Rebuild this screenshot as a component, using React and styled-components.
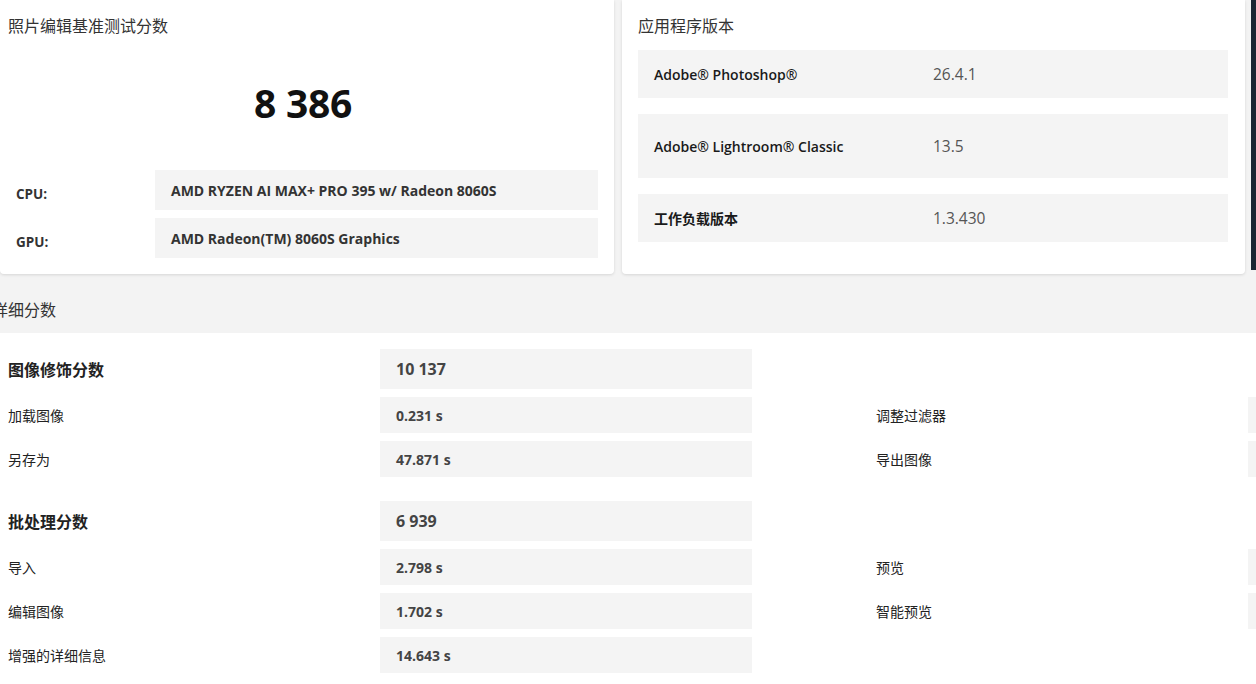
import React from "react";
import styled, { createGlobalStyle } from "styled-components";

const Global = createGlobalStyle`
  html, body { margin: 0; padding: 0; background: #ffffff; overflow: hidden; }
  body { font-family: "Open Sans", "Noto Sans CJK SC", sans-serif; color: #222; }
  * { box-sizing: border-box; }
`;

const Page = styled.div`
  width: 1256px;
  height: 684px;
  overflow: hidden;
  background: #ffffff;
`;

const TopArea = styled.div`
  background: #f3f3f3;
`;

const TopRow = styled.div`
  display: flex;
  align-items: flex-start;
  gap: 8px;
`;

const Card = styled.section`
  flex: 0 0 ${(p) => p.$width}px;
  height: 274px;
  background: #ffffff;
  border-radius: 0 0 4px 4px;
  box-shadow: 0 1px 3px rgba(0, 0, 0, 0.12);
  padding: ${(p) => p.$pad};
  display: flex;
  flex-direction: column;
`;

const DarkEdge = styled.div`
  flex: 0 0 12px;
  height: 270px;
  margin-left: -2px;
  background: #1c2733;
`;

const CardTitle = styled.h2`
  margin: 0;
  flex: 0 0 50px;
  height: 50px;
  display: flex;
  align-items: center;
  font-family: "Noto Sans CJK SC", sans-serif;
  font-size: 16px;
  font-weight: 400;
  color: #333;
`;

const BigScore = styled.div`
  flex: 0 0 104px;
  height: 104px;
  display: flex;
  align-items: center;
  justify-content: center;
  font-size: 39px;
  font-weight: 700;
  color: #111;
  letter-spacing: -0.3px;
`;

const SpecList = styled.div`
  display: flex;
  flex-direction: column;
  gap: 8px;
  margin-top: 16px;
`;

const SpecRow = styled.div`
  display: grid;
  grid-template-columns: 147px 1fr;
  height: 40px;
`;

const SpecLabel = styled.div`
  padding-left: 8px;
  padding-top: 7px;
  display: flex;
  align-items: center;
  font-size: 13.5px;
  font-weight: 700;
  color: #333;
`;

const SpecValue = styled.div`
  background: #f4f4f4;
  display: flex;
  align-items: center;
  padding-left: 16px;
  font-size: 14px;
  font-weight: 700;
  color: #333;
`;

const VersionList = styled.div`
  display: flex;
  flex-direction: column;
  gap: 16px;
`;

const VersionRow = styled.div`
  display: grid;
  grid-template-columns: 279px 1fr;
  align-items: center;
  flex: 0 0 ${(p) => p.$h}px;
  height: ${(p) => p.$h}px;
  background: #f4f4f4;
  padding-left: 16px;
`;

const VersionName = styled.div`
  font-size: 14px;
  font-weight: 600;
  color: #1a1a1a;
`;

const VersionNum = styled.div`
  font-size: 15.5px;
  font-weight: 400;
  color: #555;
`;

const SectionHeader = styled.h3`
  margin: 0 0 0 -8px;
  height: 59px;
  padding-top: 10px;
  display: flex;
  align-items: center;
  font-family: "Noto Sans CJK SC", sans-serif;
  font-size: 16px;
  font-weight: 400;
  color: #333;
`;

const Details = styled.div`
  display: flex;
  flex-direction: column;
  gap: 8px;
  padding: 16px 0 0 8px;
`;

const DetailRow = styled.div`
  display: grid;
  grid-template-columns: 372px 372px 124px 372px 372px;
  height: ${(p) => (p.$score ? 40 : 36)}px;
  margin-top: ${(p) => (p.$spaced ? 16 : 0)}px;
`;

const DetailLabel = styled.div`
  display: flex;
  align-items: center;
  font-family: "Noto Sans CJK SC", sans-serif;
  font-size: ${(p) => (p.$score ? 16 : 14)}px;
  font-weight: ${(p) => (p.$score ? 700 : 400)};
  color: #222;
`;

const DetailValue = styled.div`
  display: flex;
  align-items: center;
  padding-left: 16px;
  background: ${(p) => (p.$empty ? "transparent" : "#f4f4f4")};
  font-size: ${(p) => (p.$score ? 16 : 14)}px;
  font-weight: 700;
  color: #444;
`;

const Spacer = styled.div``;

const groups = [
  {
    title: "图像修饰分数",
    score: "10 137",
    items: [
      ["加载图像", "0.231 s", "调整过滤器", ""],
      ["另存为", "47.871 s", "导出图像", ""],
    ],
  },
  {
    title: "批处理分数",
    score: "6 939",
    items: [
      ["导入", "2.798 s", "预览", ""],
      ["编辑图像", "1.702 s", "智能预览", ""],
      ["增强的详细信息", "14.643 s", null, null],
    ],
  },
];

export default function App() {
  return (
    <Page>
      <Global />
      <TopArea>
        <TopRow>
          <Card $width={614} $pad="0 16px 16px 8px">
            <CardTitle>照片编辑基准测试分数</CardTitle>
            <BigScore>8 386</BigScore>
            <SpecList>
              <SpecRow>
                <SpecLabel>CPU:</SpecLabel>
                <SpecValue>AMD RYZEN AI MAX+ PRO 395 w/ Radeon 8060S</SpecValue>
              </SpecRow>
              <SpecRow>
                <SpecLabel>GPU:</SpecLabel>
                <SpecValue>AMD Radeon(TM) 8060S Graphics</SpecValue>
              </SpecRow>
            </SpecList>
          </Card>
          <Card $width={623} $pad="0 17px 16px 16px">
            <CardTitle>应用程序版本</CardTitle>
            <VersionList>
              <VersionRow $h={48}>
                <VersionName>Adobe® Photoshop®</VersionName>
                <VersionNum>26.4.1</VersionNum>
              </VersionRow>
              <VersionRow $h={64}>
                <VersionName>Adobe® Lightroom® Classic</VersionName>
                <VersionNum>13.5</VersionNum>
              </VersionRow>
              <VersionRow $h={48}>
                <VersionName>工作负载版本</VersionName>
                <VersionNum>1.3.430</VersionNum>
              </VersionRow>
            </VersionList>
          </Card>
          <DarkEdge />
        </TopRow>
        <SectionHeader>详细分数</SectionHeader>
      </TopArea>
      <Details>
        {groups.map((g, gi) => (
          <React.Fragment key={g.title}>
            <DetailRow $score $spaced={gi > 0}>
              <DetailLabel $score>{g.title}</DetailLabel>
              <DetailValue $score>{g.score}</DetailValue>
              <Spacer />
              <DetailLabel />
              <DetailValue $empty />
            </DetailRow>
            {g.items.map(([l, v, l2, v2]) => (
              <DetailRow key={l}>
                <DetailLabel>{l}</DetailLabel>
                <DetailValue>{v}</DetailValue>
                <Spacer />
                <DetailLabel>{l2}</DetailLabel>
                <DetailValue $empty={l2 === null}>{v2}</DetailValue>
              </DetailRow>
            ))}
          </React.Fragment>
        ))}
      </Details>
    </Page>
  );
}
